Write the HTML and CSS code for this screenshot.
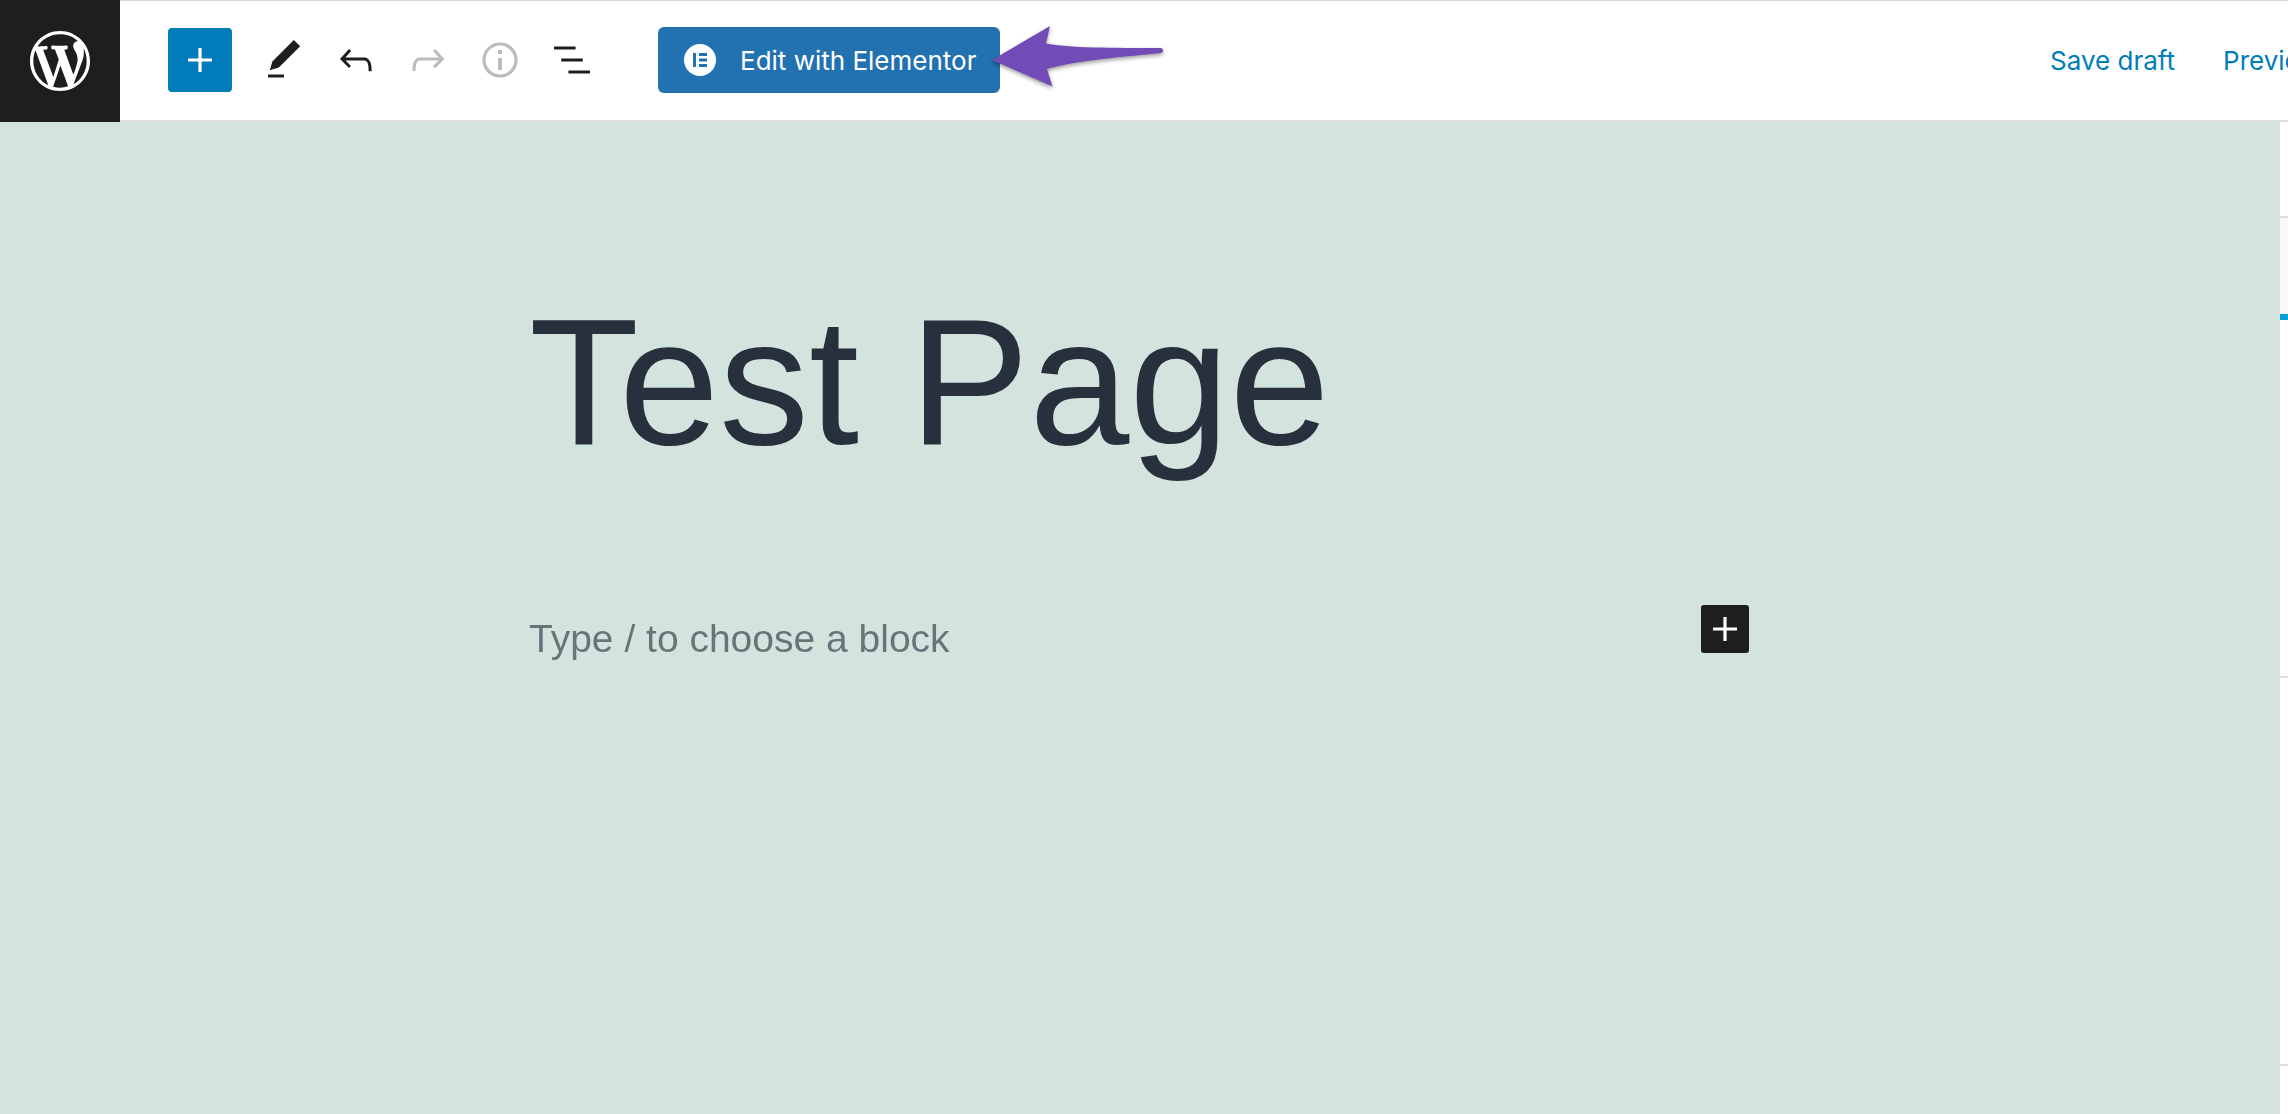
FILE: index.html
```html
<!doctype html>
<html lang="en">
<head>
  <meta charset="utf-8">
  <title>Edit Page</title>
  <link rel="stylesheet" href="styles.css">
</head>
<body>

<!-- top toolbar -->
<header class="header">
  <a href="#" class="wp-logo" aria-label="View Pages">
    <svg viewBox="-2 -2 24 24"><path d="M20 10c0-5.51-4.49-10-10-10C4.48 0 0 4.49 0 10c0 5.52 4.48 10 10 10 5.51 0 10-4.48 10-10zM7.78 15.37L4.37 6.22c.55-.02 1.17-.08 1.17-.08.5-.06.44-1.13-.06-1.11 0 0-1.45.11-2.37.11-.18 0-.37 0-.58-.01C4.12 2.69 6.87 1.11 10 1.11c2.33 0 4.45.87 6.05 2.34-.68-.11-1.65.39-1.65 1.58 0 .74.45 1.36.9 2.1.35.61.55 1.36.55 2.46 0 1.49-1.4 5-1.4 5l-3.03-8.37c.54-.02.82-.17.82-.17.5-.05.44-1.25-.06-1.22 0 0-1.44.12-2.38.12-.87 0-2.33-.12-2.33-.12-.5-.03-.56 1.2-.06 1.22l.92.08 1.26 3.41zM17.41 10c.24-.64.74-1.87.43-4.25.7 1.29 1.05 2.71 1.05 4.25 0 3.29-1.73 6.24-4.4 7.78.97-2.59 1.94-5.2 2.92-7.78zM6.1 18.09C3.12 16.65 1.11 13.53 1.11 10c0-1.3.23-2.48.72-3.59C3.25 10.3 4.67 14.2 6.1 18.09zm4.03-6.63l2.58 6.98c-.86.29-1.76.45-2.71.45-.79 0-1.57-.11-2.29-.33.81-2.38 1.62-4.74 2.42-7.1z"/></svg>
  </a>

  <div class="toolbar">
    <button class="add-btn" aria-label="Toggle block inserter">
      <svg viewBox="0 0 24 24"><path d="M18 11.2h-5.2V6h-1.6v5.2H6v1.6h5.2V18h1.6v-5.2H18z"/></svg>
    </button>
    <div class="tools">
      <button class="tool-btn" aria-label="Tools">
        <svg viewBox="0 0 24 24"><path d="M20.1 5.1L16.9 2 6.2 12.7l-1.3 4.4 4.5-1.3L20.1 5.1zM4 20.8h8v-1.5H4v1.5z"/></svg>
      </button>
      <button class="tool-btn" aria-label="Undo">
        <svg viewBox="0 0 24 24"><path d="M18.3 11.7c-.6-.6-1.4-.9-2.3-.9H6.7l2.9-3.3-1.1-1-4.5 5L8.5 16l1-1-2.7-2.7H16c.5 0 .9.2 1.3.5 1 1 1 3.4 1 4.5v.3h1.5v-.2c0-1.5 0-4.3-1.5-5.7z"/></svg>
      </button>
      <button class="tool-btn" aria-label="Redo" disabled>
        <svg viewBox="0 0 24 24"><path d="M15.6 6.5l-1.1 1 2.9 3.3H8c-.9 0-1.7.3-2.3.9-1.4 1.5-1.4 4.2-1.4 5.6v.2h1.5v-.3c0-1.1 0-3.5 1-4.5.3-.3.7-.5 1.3-.5h9.2L14.5 15l1.1 1.1 4.6-4.6-4.6-5z"/></svg>
      </button>
      <button class="tool-btn" aria-label="Details" disabled>
        <svg viewBox="0 0 24 24"><path d="M12 3.2c-4.8 0-8.8 3.9-8.8 8.8 0 4.8 3.9 8.8 8.8 8.8 4.8 0 8.8-3.9 8.8-8.8 0-4.8-4-8.8-8.8-8.8zm0 16c-4 0-7.2-3.3-7.2-7.2C4.8 8 8 4.8 12 4.8s7.2 3.3 7.2 7.2c0 4-3.2 7.2-7.2 7.2zM11 17h2v-6h-2v6zm0-8h2V7h-2v2z"/></svg>
      </button>
      <button class="tool-btn" aria-label="List view">
        <svg viewBox="0 0 24 24"><path d="M13.8 5.2H3v1.5h10.8V5.2zm-3.6 12v1.5H21v-1.5H10.2zm7.2-6H6.6v1.5h10.8v-1.5z"/></svg>
      </button>
    </div>
  </div>

  <div class="elementor">
    <button class="elementor-btn">
      <svg viewBox="0 0 32 32"><circle cx="16" cy="16" r="16" fill="#fff"/><path fill="#2271b1" d="M9 9h3v14H9zM15 9h8v3h-8zM15 14.500h8v3h-8zM15 20h8v3h-8z"/></svg>
      Edit with Elementor
    </button>
    <svg class="arrow" viewBox="0 0 180 70"><path d="M2 36L60 2 56 19.500C80 24 120 24 170 24a2.500 2.500 0 0 1 1 5C120 34 85 37 57 45l5.500 17.500z"/></svg>
  </div>

  <div class="actions">
    <button class="link-btn">Save draft</button>
    <button class="link-btn">Preview</button>
  </div>
</header>

<div class="editor">
  <main class="canvas">
    <div class="content">
      <h1 class="title" contenteditable="true" spellcheck="false">Test Page</h1>
      <div class="block">
        <input class="block-input" type="text" aria-label="Add a block" placeholder="Type / to choose a block">
        <button class="block-add" aria-label="Add block">
          <svg viewBox="0 0 24 24"><path d="M18 11.2h-5.2V6h-1.6v5.2H6v1.6h5.2V18h1.6v-5.2H18z"/></svg>
        </button>
      </div>
    </div>
  </main>

  <!-- edge of the settings sidebar -->
  <aside class="sidebar">
    <div class="panel panel-tabs"></div>
    <div class="panel panel-current"></div>
    <div class="panel panel-status"></div>
    <div class="panel panel-image"></div>
  </aside>
</div>

</body>
</html>
```

FILE: styles.css
```css
* {
  box-sizing: border-box;
}

body {
  margin: 0;
  height: 100vh;
  display: flex;
  flex-direction: column;
  overflow: hidden;
  font-family: Inter, "Liberation Sans", sans-serif;
  color: #1e1e1e;
  background: #fff;
}

button {
  display: flex;
  align-items: center;
  justify-content: center;
  border: none;
  padding: 0;
  background: none;
  font-family: inherit;
  color: inherit;
  cursor: pointer;
}

svg {
  display: block;
  fill: currentColor;
}

.header {
  flex: none;
  height: 122px;
  display: flex;
  align-items: center;
  border-bottom: 2px solid #e0e0e0;
  box-shadow: inset 0 1px 0 #d6d6d6;
}

.wp-logo {
  width: 120px;
  height: 122px;
  flex: none;
  align-self: flex-start;
  display: flex;
  align-items: center;
  justify-content: center;
  background: #1e1e1e;
  color: #fff;
}

.wp-logo svg {
  width: 72px;
  height: 72px;
}

.toolbar {
  display: flex;
  align-items: center;
  gap: 16px;
  margin-left: 48px;
}

.toolbar svg,
.block-add svg {
  width: 48px;
  height: 48px;
}

.add-btn {
  width: 64px;
  height: 64px;
  border-radius: 4px;
  background: #007cba;
  color: #fff;
}

.tools {
  display: flex;
}

.tool-btn {
  width: 72px;
  height: 72px;
}

.tool-btn:disabled {
  color: #bbb;
  cursor: default;
}

.elementor {
  position: relative;
  margin-left: 50px;
}

.elementor-btn {
  height: 66px;
  padding: 0 24px 0 26px;
  gap: 24px;
  border-radius: 6px;
  background: #2271b1;
  color: #fff;
  font-size: 26px;
  white-space: nowrap;
}

.elementor-btn svg {
  width: 32px;
  height: 32px;
}

/* arrow lies over the right edge of the button */
.arrow {
  position: absolute;
  top: -3px;
  left: calc(100% - 10px);
  width: 180px;
  height: 70px;
  overflow: visible;
  fill: #724bb7;
  filter: drop-shadow(0 2px 2px rgba(0, 0, 0, 0.4));
  pointer-events: none;
}

.actions {
  flex: none;
  width: 238px;
  margin-left: auto;
  display: flex;
  gap: 48px;
  overflow: hidden;
}

.link-btn {
  flex: none;
  height: 64px;
  font-size: 26px;
  color: #007cba;
}

.editor {
  flex: 1;
  display: flex;
  min-height: 0;
}

.canvas {
  flex: 1;
  padding-top: 148px;
  font-family: "Liberation Sans", Arial, sans-serif;
  background: #d3e4de;
}

.content {
  width: 100%;
  max-width: 1220px;
  margin: 0 auto;
}

.title {
  margin: 0;
  font-size: 180px;
  font-weight: 400;
  line-height: 224px;
  color: #28303d;
  outline: none;
}

.block {
  display: flex;
  align-items: flex-start;
  margin-top: 111px;
}

.block-input {
  flex: 1;
  height: 68px;
  border: none;
  padding: 0;
  background: none;
  font-family: inherit;
  font-size: 39px;
  color: #28303d;
  outline: none;
}

.block-input::placeholder {
  color: #28303d;
  opacity: 0.62;
}

.block-add {
  width: 48px;
  height: 48px;
  border-radius: 3px;
  background: #1e1e1e;
  color: #fff;
}

.sidebar {
  flex: 0 0 10px;
  border-left: 2px solid #e0e0e0;
}

.panel {
  border-bottom: 2px solid #e0e0e0;
}

.panel-tabs {
  height: 96px;
}

.panel-current {
  height: 102px;
  background: #f8f9f9;
  border-bottom: 6px solid #00a0d2;
}

.panel-status {
  height: 358px;
}

.panel-image {
  height: 388px;
}
```
